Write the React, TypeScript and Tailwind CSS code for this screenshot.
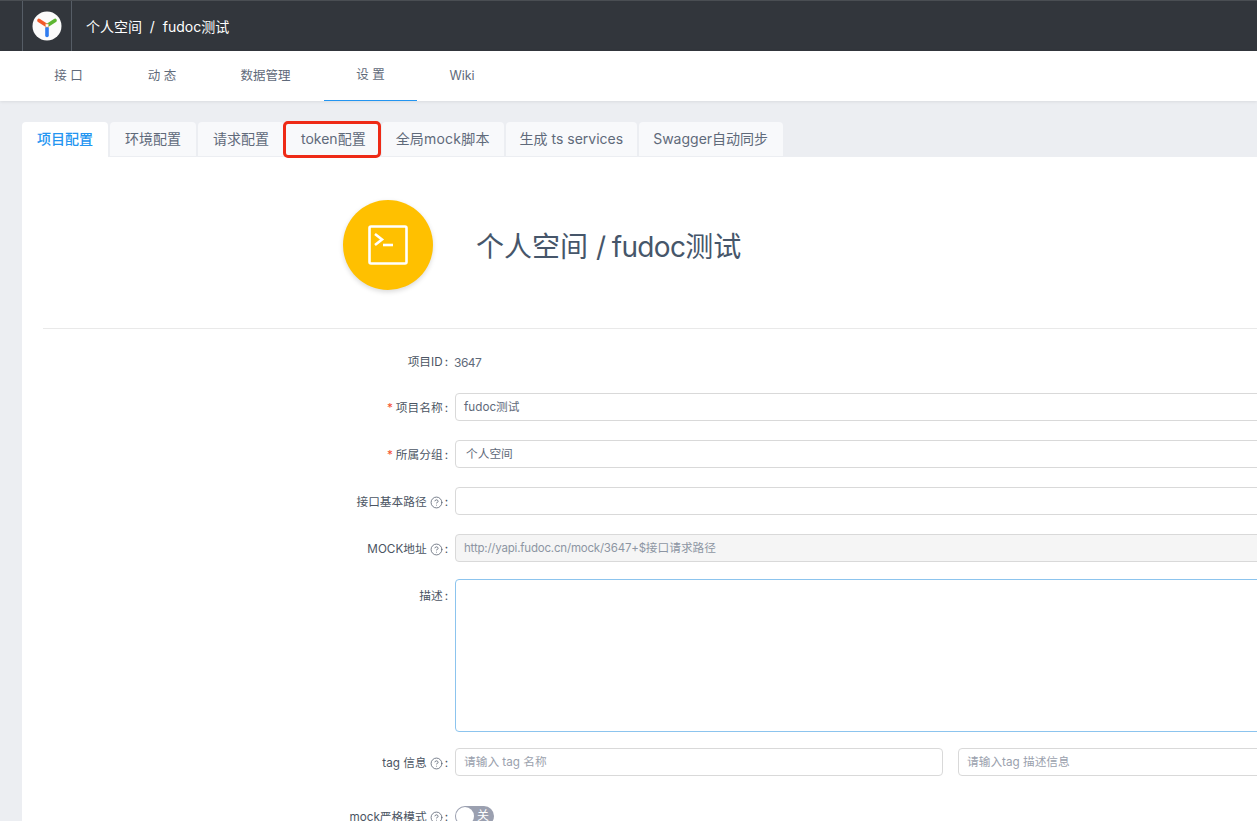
import { CircleHelp } from "lucide-react";

const tabs = [
  { label: "项目配置", padding: "px-[15px]" },
  { label: "环境配置", padding: "px-[15px]" },
  { label: "请求配置", padding: "px-[15px]" },
  { label: "token配置", padding: "pl-[15px] pr-[14px]" },
  { label: "全局mock脚本", padding: "px-[14px] tracking-[0.2px]" },
  { label: "生成 ts services", padding: "px-[14px]" },
  { label: "Swagger自动同步", padding: "pl-[14px] pr-[15px]" },
];
const navItems = [
  { label: "接 口", width: "w-[117px] pl-[20px]" },
  { label: "动 态", width: "w-[90px]" },
  { label: "数据管理", width: "w-[117px]" },
  { label: "设 置", width: "w-[93px]", active: true },
  { label: "Wiki", width: "w-[90px]" },
];

function Logo() {
  return (
    <svg viewBox="0 0 30 30" className="h-[30px] w-[30px]">
      <circle cx="15" cy="15" r="14.5" fill="#fbfbfb" />
      <path d="M14 14 L7 9.5" stroke="#f2592a" strokeWidth="3.6" strokeLinecap="round" />
      <path d="M16 14 L23 9.5" stroke="#5cb531" strokeWidth="3.6" strokeLinecap="round" />
      <path d="M15 17 L15 24.5" stroke="#2f7cf0" strokeWidth="3.6" strokeLinecap="round" />
      <rect x="13.5" y="13" width="3" height="3" fill="#fff" stroke="#e9a06a" strokeWidth="0.6" />
    </svg>
  );
}

function TerminalIcon() {
  return (
    <svg viewBox="0 0 40 40" fill="none" stroke="#fff" strokeWidth="2.6" className="h-10 w-10">
      <rect x="1.5" y="1.5" width="37" height="37" rx="1.5" />
      <path d="M7 9 L14 14.5 L7 20" />
      <path d="M15 20 L25 20" />
    </svg>
  );
}

function Label({ text, required, help }: { text: string; required?: boolean; help?: boolean }) {
  return (
    <label className="flex w-[433px] shrink-0 items-center justify-end whitespace-nowrap pr-[7px] pt-[3px] text-[11.7px] text-[#4b5563]">
      {required && <span className="mr-[3px] text-[#f5522d]">*</span>}
      <span>{text}</span>
      {help && <CircleHelp className="ml-[3px] h-[13px] w-[13px] text-[#5b6472]" strokeWidth={1.5} />}
      <span className="ml-[2px]">:</span>
    </label>
  );
}

function Field({ children, className = "" }: { children?: React.ReactNode; className?: string }) {
  return (
    <div className={`flex h-[28px] shrink-0 items-center rounded-[4px] border border-[#d9d9d9] px-[8px] pt-[2px] text-[11.7px] ${className}`}>
      {children}
    </div>
  );
}

export default function App() {
  return (
    <div className="h-[821px] w-[1257px] overflow-hidden bg-[#eceef2] font-['Inter','Noto_Sans_CJK_SC',sans-serif]">
      <header className="flex h-[51px] items-center border-t border-[#4a4e53] bg-[#32363c] pl-[22px]">
        <div className="flex h-full w-[50px] items-center justify-center border-x border-[#565d66]">
          <Logo />
        </div>
        <div className="ml-[14px] text-[14px] text-white">个人空间&nbsp; / &nbsp;fudoc测试</div>
      </header>

      <nav className="flex h-[50px] bg-white shadow-[0_1px_3px_rgba(0,0,0,0.08)]">
        {navItems.map((item) => (
          <div
            key={item.label}
            className={`flex items-center justify-center text-[12.5px] text-[#5f6a7a] ${item.width} ${item.active ? "border-b border-[#2395f1]" : ""}`}
          >
            {item.label}
          </div>
        ))}
      </nav>

      <main className="ml-[22px] mt-[21px]">
        <div className="flex h-[35px] gap-[2px]">
          {tabs.map((tab, index) => (
            <div
              key={tab.label}
              className={`relative flex items-center rounded-t-[4px] pb-[2px] text-[14px] ${tab.padding} ${
                index === 0 ? "bg-white font-medium text-[#2395f1]" : "mb-px bg-[#f8f9fb] text-[#5f6a7a]"
              }`}
            >
              {tab.label}
              {index === 3 && (
                <span className="absolute -bottom-[2px] -left-[3px] -right-[1px] -top-[1px] rounded-[5px] border-[3px] border-[#ee2a16]" />
              )}
            </div>
          ))}
        </div>

        <section className="h-[700px] bg-white pl-[21px]">
          <div className="flex h-[172px] items-start border-b border-[#e9e9e9] pl-[300px] pt-[43px]">
            <div className="flex h-[90px] w-[90px] items-center justify-center rounded-full bg-[#ffc000] shadow-[0_2px_5px_rgba(0,0,0,0.15)]">
              <TerminalIcon />
            </div>
            <h1 className="ml-[43px] mt-[29px] text-[28px] leading-[36px] text-[#46566a]">
              个人空间 / <span className="-ml-[2px] tracking-[-0.7px]">fudoc</span>测试
            </h1>
          </div>

          <div className="-ml-[21px] pt-[20px]">
            <div className="flex h-[24px] items-center">
              <Label text="项目ID" />
              <span className="-ml-[1px] pt-[3px] text-[12px] tracking-[-0.5px] text-[#5f6a7a]">3647</span>
            </div>
            <div className="mt-[20px] flex items-center">
              <Label text="项目名称" required />
              <Field className="w-[900px] bg-white text-[#5f6a7a]">fudoc测试</Field>
            </div>
            <div className="mt-[19px] flex items-center">
              <Label text="所属分组" required />
              <Field className="w-[900px] bg-white pl-[10px] text-[#5f6a7a]">个人空间</Field>
            </div>
            <div className="mt-[19px] flex items-center">
              <Label text="接口基本路径" help />
              <Field className="w-[900px] bg-white" />
            </div>
            <div className="mt-[19px] flex items-center">
              <Label text="MOCK地址" help />
              <Field className="w-[900px] bg-[#f5f5f5] text-[#8d95a3]">
                <span className="text-[11.5px] tracking-[-0.2px]">http://yapi.fudoc.cn/mock/3647+$</span>接口请求路径
              </Field>
            </div>
            <div className="mt-[17px] flex items-start">
              <div className="pt-[6px]">
                <Label text="描述" />
              </div>
              <div className="h-[153px] w-[900px] shrink-0 rounded-[4px] border border-[#8cc4ee] bg-white" />
            </div>
            <div className="mt-[16px] flex items-center">
              <Label text="tag 信息" help />
              <Field className="w-[488px] bg-white text-[#9aa1ad]">请输入 tag 名称</Field>
              <Field className="ml-[15px] w-[400px] bg-white text-[#9aa1ad]">请输入tag 描述信息</Field>
            </div>
            <div className="mt-[30px] flex items-center">
              <Label text="mock严格模式" help />
              <div className="flex h-[20px] w-[39px] items-center rounded-full bg-[#9ba0b0] pl-[1px]">
                <span className="h-[18px] w-[18px] rounded-full bg-white" />
                <span className="ml-[3px] text-[12px] text-white">关</span>
              </div>
            </div>
          </div>
        </section>
      </main>
    </div>
  );
}
